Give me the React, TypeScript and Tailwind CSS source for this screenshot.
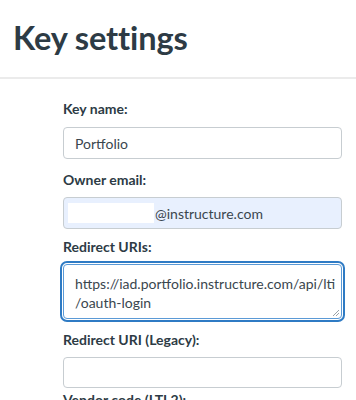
import React from 'react';

function Label({ children, className = '' }: { children: React.ReactNode; className?: string }) {
  return (
    <div className={`text-[14px] font-bold leading-[20px] text-[#2d3b45] ${className}`}>{children}</div>
  );
}

export default function App() {
  return (
    <div className="w-[356px] h-[400px] overflow-hidden bg-white font-['Lato',sans-serif] text-[#2d3b45]">
      <div className="pt-[18px] pb-[20px] pl-[13px] border-b-2 border-[#ebebeb]">
        <h1 className="text-[32.5px] leading-[39px] font-bold tracking-[-0.1px]">Key settings</h1>
      </div>

      <div className="ml-[63px] w-[279px]">
        <Label className="mt-[20px] mb-[8px]">Key name:</Label>
        <div className="h-[32px] border border-[#c7cdd1] rounded-[4px] px-[11px] flex items-center text-[14px] text-[#3a464e]">
          Portfolio
        </div>

        <Label className="mt-[11px] mb-[7px]">Owner email:</Label>
        <div className="h-[32px] border border-[#c7cdd1] rounded-[4px] pl-[4px] flex items-center gap-[1px] bg-[#e8f0fe] text-[14px] text-[#3a464e]">
          <div className="w-[86px] h-[20px] bg-white" />
          <span>@instructure.com</span>
        </div>

        <Label className="mt-[8px] mb-[7px]">Redirect URIs:</Label>
        <div className="relative h-[55px] border border-[#5b9ad6] rounded-[4px] outline-2 outline-offset-1 outline-[#2f7bc4] pl-[11px] pt-[9px] text-[14px] leading-[19px] text-[#3a464e]">
          <div>https://iad.portfolio.instructure.com/api/lti</div>
          <div>/oauth-login</div>
          <svg className="absolute right-[1px] bottom-[1px]" width="8" height="8" viewBox="0 0 8 8">
            <path d="M7 1 L1 7 M7 4 L4 7" stroke="#9aa3a9" strokeWidth="1" />
          </svg>
        </div>

        <Label className="mt-[11px] mb-[7px]">Redirect URI (Legacy):</Label>
        <div className="h-[31px] border border-[#c7cdd1] rounded-[4px]" />

        <Label className="mt-[2px]">Vendor code (LTI 2):</Label>
      </div>
    </div>
  );
}
